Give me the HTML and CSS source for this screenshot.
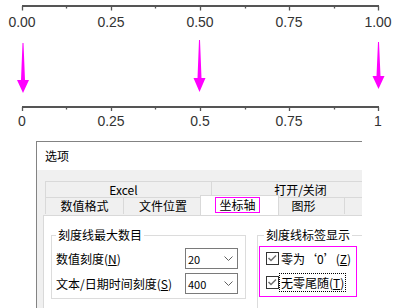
FILE: index.html
```html
<!DOCTYPE html>
<html lang="zh-CN">
<head>
  <meta charset="UTF-8" />
  <meta name="viewport" content="width=device-width, initial-scale=1" />
  <title>坐标轴刻度选项</title>
  <link rel="stylesheet" href="styles.css">
</head>
<body>
  <svg class="axes" width="399" height="141" viewBox="0 0 399 141">
    <!-- 上方坐标轴：保留两位小数 -->
    <path class="axis-line" d="M22 6H379" />
    <path class="tick" d="M22.5 6V10.5M111.5 6V10.5M200.5 6V10.5M289.5 6V10.5M378.5 6V10.5" />
    <path class="tick" d="M66.5 6V8.5M155.5 6V8.5M245.5 6V8.5M334.5 6V8.5" />
    <text class="tick-label" x="22" y="27">0.00</text>
    <text class="tick-label" x="111" y="27">0.25</text>
    <text class="tick-label" x="200" y="27">0.50</text>
    <text class="tick-label" x="289" y="27">0.75</text>
    <text class="tick-label" x="378" y="27">1.00</text>

    <polygon class="arrow" points="22.5,43 23.5,43 25,80 29,80 23,93 17,80 21,80" />
    <polygon class="arrow" points="199,40 200,40 201.5,78 205.5,78 199.5,92 193.5,78 197.5,78" />
    <polygon class="arrow" points="378,42 379,42 380.5,76 384.5,76 378.5,89 372.5,76 376.5,76" />

    <!-- 下方坐标轴：去掉尾随零 -->
    <path class="axis-line" d="M22 107H379" />
    <path class="tick" d="M22.5 107V111M111.5 107V111M200.5 107V111M289.5 107V111M378.5 107V111" />
    <path class="tick" d="M66.5 107V109.5M155.5 107V109.5M245.5 107V109.5M334.5 107V109.5" />
    <text class="tick-label" x="22" y="126">0</text>
    <text class="tick-label" x="111" y="126">0.25</text>
    <text class="tick-label" x="200" y="126">0.5</text>
    <text class="tick-label" x="289" y="126">0.75</text>
    <text class="tick-label" x="378" y="126">1</text>
  </svg>

  <div class="dialog">
    <div class="dialog-title">选项</div>
    <div class="dialog-body">
      <div class="tab-row">
        <div class="tab tab-wide tab-excel">Excel</div>
        <div class="tab tab-wide tab-open">打开/关闭</div>
      </div>
      <div class="tab-row">
        <div class="tab tab-num">数值格式</div>
        <div class="tab tab-file">文件位置</div>
        <div class="tab tab-axis active"><span class="mark">坐标轴</span></div>
        <div class="tab tab-graph">图形</div>
        <div class="tab tab-more"></div>
      </div>

      <div class="panel">
        <fieldset class="group group-max">
          <legend>刻度线最大数目</legend>
          <div class="field-grid">
            <label>数值刻度(<u>N</u>)</label>
            <div class="combo">
              <span>20</span>
              <svg width="9" height="5" viewBox="0 0 9 5"><polyline points="0.5,0.5 4.5,4.5 8.5,0.5" /></svg>
            </div>
            <label>文本/日期时间刻度(<u>S</u>)</label>
            <div class="combo">
              <span>400</span>
              <svg width="9" height="5" viewBox="0 0 9 5"><polyline points="0.5,0.5 4.5,4.5 8.5,0.5" /></svg>
            </div>
          </div>
        </fieldset>

        <fieldset class="group group-labels">
          <legend>刻度线标签显示</legend>
          <div class="mark-box">
            <div class="check-row">
              <span class="checkbox"><svg width="11" height="11" viewBox="0 0 11 11"><polyline points="1.5,5 4,7.5 9,2.5" /></svg></span>
              <span class="check-text">零为‘0’(<u>Z</u>)</span>
            </div>
            <div class="check-row">
              <span class="checkbox"><svg width="11" height="11" viewBox="0 0 11 11"><polyline points="1.5,5 4,7.5 9,2.5" /></svg></span>
              <span class="check-text focus">无零尾随(<u>T</u>)</span>
            </div>
          </div>
        </fieldset>
      </div>
    </div>
  </div>
</body>
</html>
```

FILE: styles.css
```css
html, body {
  margin: 0;
  background: #fff;
  overflow: hidden;
}
.axes {
  display: block;
}
.axis-line {
  stroke: #555;
  stroke-width: 2;
  fill: none;
}
.tick {
  stroke: #555;
  stroke-width: 1.3;
  fill: none;
}
.tick-label {
  font: 14px "Liberation Sans", Arial, sans-serif;
  fill: #333;
  text-anchor: middle;
}
.arrow {
  fill: #ff00ff;
}

.dialog {
  margin-left: 36px;
  width: 326px;
  height: 167px;
  box-sizing: border-box;
  border-top: 1px solid #838383;
  border-left: 1px solid #838383;
  overflow: hidden;
  font-family: "Noto Sans CJK SC", "Noto Sans", sans-serif;
  font-size: 12px;
  color: #000;
}
.dialog-title {
  height: 28px;
  line-height: 28px;
  padding-left: 8px;
  background: #fff;
}
.dialog-body {
  background: #f0f0f0;
  padding: 11px 0 0 6px;
  width: 420px;
  height: 200px;
}
.tab-row {
  display: flex;
  margin-left: 2px;
  align-items: flex-start;
}
.tab {
  box-sizing: border-box;
  border: 1px solid #d9d9d9;
  border-bottom: none;
  margin-right: -1px;
  background: #f0f0f0;
  text-align: center;
  line-height: 15px;
  height: 16px;
  flex: none;
}
.tab-row + .tab-row .tab {
  height: 17px;
}
.tab-wide {
  width: 167px;
}
.tab-excel {
  padding-right: 10px;
}
.tab-open {
  padding-left: 12px;
}
.tab-num {
  width: 79px;
}
.tab-file {
  width: 80px;
}
.tab-axis {
  width: 75px;
}
.tab-graph {
  width: 69px;
  padding-right: 14px;
}
.tab-more {
  width: 80px;
}
.tab-row .tab.active {
  position: relative;
  z-index: 1;
  background: #fff;
  width: 79px;
  height: 20px;
  margin: -2px -3px 0 -2px;
  padding-top: 1px;
}
.mark {
  display: inline-block;
  border: 1px solid #ff00ff;
  padding: 0 3px;
  line-height: 14px;
  margin-left: -4px;
}

.panel {
  display: flex;
  align-items: flex-start;
  gap: 11px;
  background: #fff;
  border: 1px solid #d9d9d9;
  padding: 11px 0 0 7px;
  height: 120px;
}
.group {
  margin: 0;
  border: 1px solid #dcdcdc;
  min-width: 0;
}
.group legend {
  line-height: 16px;
  padding: 0 2px;
}
.group-max {
  width: 195px;
  box-sizing: border-box;
  padding: 5px 7px 4px 4px;
}
.group-labels {
  width: 160px;
  height: 110px;
  box-sizing: border-box;
  padding: 3px 0 0 1px;
}
.group-labels legend {
  margin-left: 5px;
}
.field-grid {
  display: grid;
  grid-template-columns: 1fr 53px;
  row-gap: 4px;
  align-items: center;
}
.field-grid label {
  white-space: nowrap;
  line-height: 16px;
}
.combo {
  box-sizing: border-box;
  height: 21px;
  border: 1px solid #7a7a7a;
  background: #fff;
  display: flex;
  align-items: center;
  justify-content: space-between;
  padding: 0 4px 0 2px;
  font-size: 11px;
}
.combo polyline {
  fill: none;
  stroke: #606060;
  stroke-width: 1;
}
.mark-box {
  width: 98px;
  box-sizing: border-box;
  border: 1px solid #ff00ff;
  padding: 0 0 3px 6px;
  display: flex;
  flex-direction: column;
  gap: 2px;
}
.check-row {
  display: flex;
  align-items: center;
  height: 22px;
  white-space: nowrap;
}
.checkbox {
  box-sizing: border-box;
  width: 13px;
  height: 13px;
  border: 1px solid #333;
  background: #fff;
  display: flex;
}
.checkbox polyline {
  fill: none;
  stroke: #707070;
  stroke-width: 1.5;
}
.check-text {
  margin-left: 0;
  padding: 0 1px;
  border: 1px dotted transparent;
  line-height: 17px;
}
.check-text.focus {
  border-color: #000;
}
```
